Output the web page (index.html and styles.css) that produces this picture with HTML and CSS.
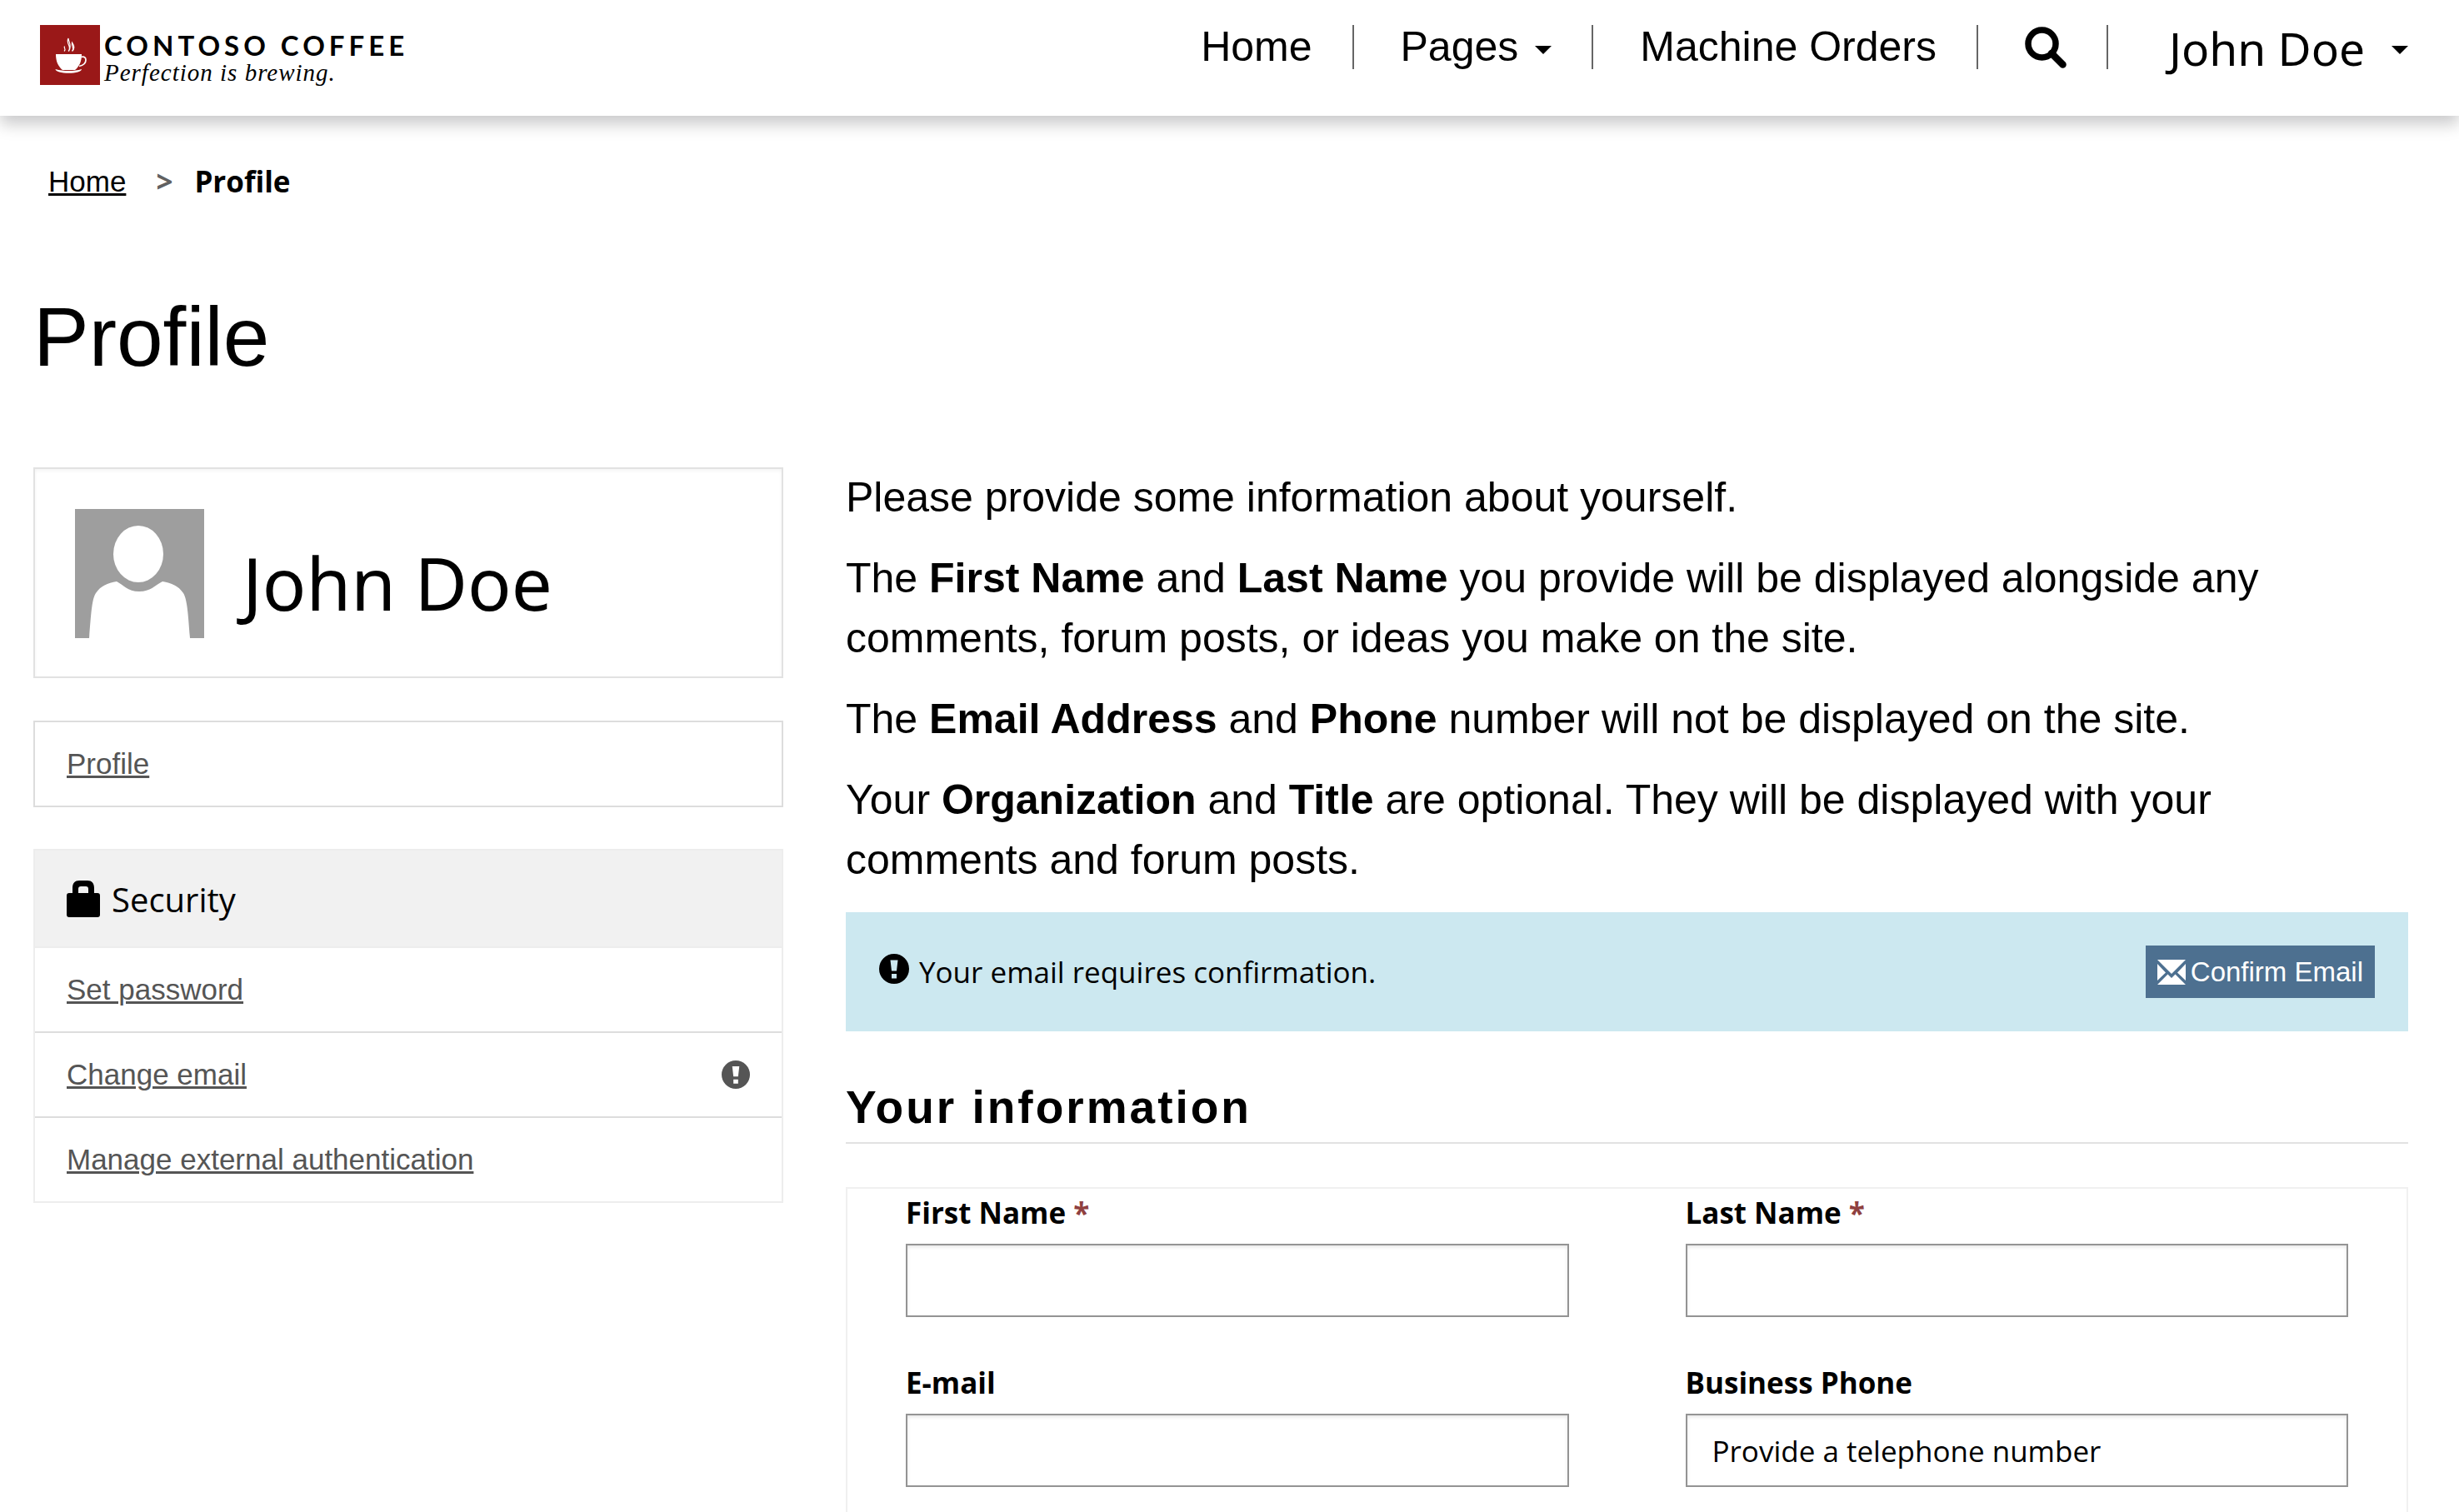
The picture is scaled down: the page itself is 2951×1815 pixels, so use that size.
FILE: index.html
```html
<!DOCTYPE html>
<html lang="en">
<head>
<meta charset="utf-8">
<title>Profile - Contoso Coffee</title>
<link rel="stylesheet" href="styles.css">
</head>
<body>
<header class="site-header">
  <a class="brand" href="#">
    <svg class="brand-mark" viewBox="0 0 72 72" aria-hidden="true">
      <rect width="72" height="72" fill="#9a1818"/>
      <path d="M19 35h31c0 9-3 15-8 19H27c-5-4-8-10-8-19z" fill="#fff"/>
      <path d="M18.500 53c5 1.500 10 2 16 2s11-.5 15.500-2c0 3-7 4.800-15.500 4.800s-16-1.800-16-4.800z" fill="#fff"/>
      <path d="M49.500 38.500c3.500-1 5.500.5 5.500 3.500 0 4-3.500 6.500-8 7.500" fill="none" stroke="#fff" stroke-width="1.700"/>
      <path d="M29 31.500c3-3-1-3.500.500-6M34 31.500c5-6-3.500-9 0-15.500 0 4 5 8 .500 15.500M38.500 31.500c3.500-4-1-5.500 0-10.500 3 4 3 7.500 0 10.500" fill="none" stroke="#fff" stroke-width="1.200"/>
    </svg>
    <span class="brand-text">
      <span class="brand-name">CONTOSO COFFEE</span>
      <span class="brand-tagline">Perfection is brewing.</span>
    </span>
  </a>
  <nav aria-label="Main">
    <ul class="nav">
      <li><a href="#">Home</a></li>
      <li><button type="button">Pages<span class="caret"></span></button></li>
      <li><a href="#">Machine Orders</a></li>
      <li><button type="button" class="nav-search" aria-label="Search">
        <svg viewBox="0 0 50 50" aria-hidden="true"><circle cx="20.500" cy="20.500" r="16.500" fill="none" stroke="#000" stroke-width="7.500"/><path d="M32 32l13.500 13.500" stroke="#000" stroke-width="8.500" stroke-linecap="round"/></svg>
      </button></li>
      <li class="nav-user"><button type="button">John Doe<span class="caret"></span></button></li>
    </ul>
  </nav>
</header>

<main class="page">
  <nav aria-label="Breadcrumb">
    <ol class="breadcrumb">
      <li><a href="#">Home</a></li>
      <li class="current">Profile</li>
    </ol>
  </nav>
  <h1>Profile</h1>

  <div class="columns">
    <aside class="sidebar">
      <section class="user-card">
        <svg class="avatar" viewBox="0 0 155 155" aria-hidden="true">
          <rect width="155" height="155" fill="#9e9e9e"/>
          <ellipse cx="76" cy="54" rx="30" ry="34" fill="#fff"/>
          <path d="M17 155C19 130 20 108 25 101C31 92 39 89 50 87C58 91 63 99 77 99C91 99 95 92 105 87C116 89 124 92 130 101C135 109 136 130 138 155z" fill="#fff"/>
        </svg>
        <span class="user-name">John Doe</span>
      </section>

      <ul class="link-list">
        <li><a href="#">Profile</a></li>
      </ul>

      <section class="panel">
        <h2 class="panel-title">
          <svg class="icon-lock" viewBox="0 0 40 44" aria-hidden="true"><path d="M3 15h4V9c0-6 3-9 8-9h10c5 0 8 3 8 9v6h4q3 0 3 3v23q0 3-3 3H3q-3 0-3-3V18q0-3 3-3zM14 15h12V10q0-3-3-3h-6q-3 0-3 3z" fill="#000" fill-rule="evenodd"/></svg>
          Security
        </h2>
        <ul>
          <li><a href="#">Set password</a></li>
          <li><a href="#">Change email</a>
            <svg class="icon-alert" viewBox="0 0 36 36" aria-hidden="true"><path d="M18 0a18 18 0 1 1 0 36a18 18 0 1 1 0-36zM13.500 7.500l1.500 13h6l1.500-13zM15 24v5.500h6V24z" fill="currentColor" fill-rule="evenodd"/></svg>
          </li>
          <li><a href="#">Manage external authentication</a></li>
        </ul>
      </section>
    </aside>

    <div class="content">
      <div class="intro">
        <p>Please provide some information about yourself.</p>
        <p>The <b>First Name</b> and <b>Last Name</b> you provide will be displayed alongside any comments, forum posts, or ideas you make on the site.</p>
        <p>The <b>Email Address</b> and <b>Phone</b> number will not be displayed on the site.</p>
        <p>Your <b>Organization</b> and <b>Title</b> are optional. They will be displayed with your comments and forum posts.</p>
      </div>

      <div class="notice" role="alert">
        <svg class="icon-alert" viewBox="0 0 36 36" aria-hidden="true"><path d="M18 0a18 18 0 1 1 0 36a18 18 0 1 1 0-36zM13.500 7.500l1.500 13h6l1.500-13zM15 24v5.500h6V24z" fill="currentColor" fill-rule="evenodd"/></svg>
        <span class="notice-text">Your email requires confirmation.</span>
        <button type="button" class="confirm">
          <svg viewBox="0 0 34 30" aria-hidden="true"><path d="M0 0h34L17 17zM0 5l10 10.500L0 25zM34 5v20L24 15.500zM0 30l12.500-12.500L17 22l4.500-4.500L34 30z" fill="#fff"/></svg>
          Confirm Email
        </button>
      </div>

      <form>
        <h2 class="form-title">Your information</h2>
        <div class="fields">
          <div class="field">
            <label for="first-name">First Name <span class="required">*</span></label>
            <input id="first-name" type="text">
          </div>
          <div class="field">
            <label for="last-name">Last Name <span class="required">*</span></label>
            <input id="last-name" type="text">
          </div>
          <div class="field">
            <label for="email">E-mail</label>
            <input id="email" type="email">
          </div>
          <div class="field">
            <label for="phone">Business Phone</label>
            <input id="phone" type="tel" placeholder="Provide a telephone number">
          </div>
        </div>
      </form>
    </div>
  </div>
</main>
</body>
</html>
```
FILE: styles.css
```css
* {
  box-sizing: border-box;
}

body {
  margin: 0;
  background: #fff;
  color: #000;
  font-family: "Liberation Sans", Arial, sans-serif;
  font-size: 35px;
}

h1, h2, p, ul, ol {
  margin: 0;
  padding: 0;
  font-weight: normal;
}

ul, ol {
  list-style: none;
}

svg {
  display: block;
  flex: none;
}

a {
  color: inherit;
}

button {
  border: 0;
  padding: 0;
  background: none;
  color: inherit;
  font: inherit;
}

/* Header */

.site-header {
  display: flex;
  justify-content: space-between;
  align-items: flex-start;
  padding: 30px 61px 37px 48px;
  box-shadow: 0 10px 18px rgba(0, 5, 10, 0.21);
}

.brand {
  display: flex;
  gap: 5px;
  text-decoration: none;
}

.brand-mark {
  width: 72px;
  height: 72px;
}

.brand-text {
  display: flex;
  flex-direction: column;
  padding-top: 5px;
}

.brand-name {
  font-family: Lato, sans-serif;
  font-weight: bold;
  font-size: 33px;
  line-height: 38px;
  letter-spacing: 5px;
}

.brand-tagline {
  font-family: "Liberation Serif", serif;
  font-style: italic;
  font-size: 29px;
  line-height: 29px;
  letter-spacing: 1px;
}

.nav {
  display: flex;
  font-size: 50px;
  line-height: 52px;
}

.nav li {
  height: 53px;
  padding: 0 48px 0 56px;
  border-left: 2px solid #666;
}

.nav li:first-child {
  border-left: 0;
}

.nav .nav-user {
  padding: 0 0 0 73px;
  font-family: "Noto Sans", sans-serif;
  font-size: 55px;
  line-height: 55px;
}

.nav a {
  text-decoration: none;
}

.nav button {
  display: flex;
  align-items: flex-start;
  gap: 20px;
}

.nav .nav-user button {
  gap: 32px;
}

.nav-search svg {
  width: 50px;
  height: 50px;
  margin-top: 2px;
}

.caret {
  margin-top: 25px;
  border: 10px solid transparent;
  border-top-color: #000;
  border-bottom: 0;
}

/* Page */

.page {
  padding: 54px 61px 0 40px;
}

.breadcrumb {
  display: flex;
  padding-left: 18px;
  line-height: 50px;
}

.breadcrumb .current {
  font-family: "Open Sans", sans-serif;
  font-weight: bold;
}

.breadcrumb .current::before {
  content: ">";
  padding: 0 26px 0 36px;
  color: #616161;
}

h1 {
  margin: 106px 0 102px;
  font-size: 100px;
  line-height: 110px;
}

.columns {
  display: grid;
  grid-template-columns: 12fr 25fr;
  gap: 75px;
  align-items: start;
}

/* Sidebar */

.user-card {
  display: flex;
  gap: 46px;
  margin-bottom: 51px;
  padding: 48px 48px 46px;
  border: 2px solid #e2e2e2;
  box-shadow: inset 0 2px 4px rgba(0, 0, 0, 0.05);
}

.avatar {
  width: 155px;
  height: 155px;
}

.user-name {
  padding-top: 28px;
  font-family: "Noto Sans", sans-serif;
  font-size: 87px;
  line-height: 120px;
}

.sidebar li {
  display: flex;
  justify-content: space-between;
  align-items: center;
  height: 100px;
  padding: 0 38px;
  color: #555;
}

.sidebar li a {
  text-decoration-thickness: 3px;
}

.link-list {
  margin-bottom: 50px;
  border: 2px solid #ddd;
}

.panel {
  border: 2px solid #ededed;
}

.panel li + li {
  height: 102px;
  border-top: 2px solid #ddd;
}

.panel-title {
  display: flex;
  gap: 14px;
  padding: 32px 38px 29px;
  background: #f1f1f1;
  border-bottom: 2px solid #ededed;
  font-family: "Open Sans", sans-serif;
  font-size: 40px;
  line-height: 54px;
}

.icon-lock {
  width: 40px;
  height: 44px;
  margin-top: 4px;
}

.icon-alert {
  width: 34px;
  height: 34px;
}

/* Content */

.intro {
  font-size: 50px;
  line-height: 72px;
}

.intro p {
  margin-bottom: 25px;
}

.notice {
  display: flex;
  align-items: center;
  gap: 12px;
  margin-top: 27px;
  padding: 40px;
  background: #cce8f0;
}

.notice .icon-alert {
  width: 36px;
  height: 36px;
  margin-bottom: 8px;
}

.notice-text {
  flex: 1;
  font-family: "Open Sans", sans-serif;
  font-size: 35px;
  line-height: 50px;
}

.confirm {
  display: flex;
  align-items: center;
  gap: 6px;
  padding: 12px 14px;
  background: #4d7090;
  color: #fff;
  font-size: 33px;
  line-height: 39px;
}

.confirm svg {
  width: 34px;
  height: 30px;
}

.form-title {
  margin: 56px 0 52px;
  padding-bottom: 7px;
  border-bottom: 2px solid #e2e2e2;
  font-size: 55px;
  font-weight: bold;
  line-height: 70px;
  letter-spacing: 3px;
}

.fields {
  display: grid;
  grid-template-columns: 1fr 1fr;
  border: 2px solid #f0f0f0;
  border-bottom: 0;
}

.field {
  display: flex;
  flex-direction: column;
  gap: 12px;
  padding: 4px 70px 50px;
  font-family: "Open Sans", sans-serif;
  font-size: 35px;
}

.field label {
  font-weight: bold;
  line-height: 50px;
}

.required {
  color: #8f4040;
}

.field input {
  width: 100%;
  height: 88px;
  padding: 0 30px;
  border: 2px solid #949494;
  border-radius: 0;
  box-shadow: inset 0 2px 4px rgba(0, 0, 0, 0.1);
  font: inherit;
}

.field input::placeholder {
  color: #000;
  opacity: 1;
}
```
